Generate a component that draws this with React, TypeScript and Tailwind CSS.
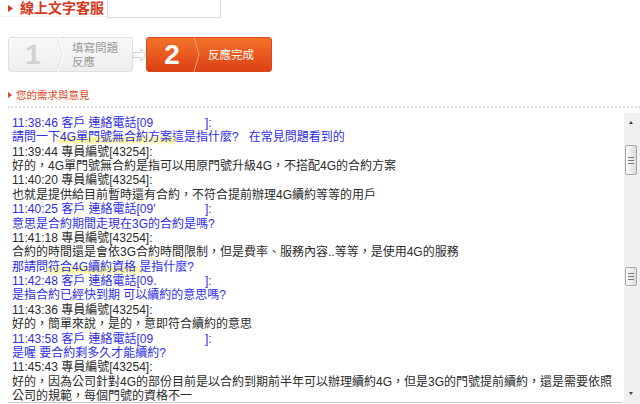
import React from "react";

const FONT = { fontFamily: '"Liberation Sans", "Noto Sans CJK TC", sans-serif' };

type Line = { t: React.ReactNode; c: "b" | "k" | "g" };

function Hl({ children }: { children: React.ReactNode }) {
  return (
    <span className="relative inline-block">
      <span className="absolute left-[-2px] right-[-4px] top-[7px] h-[6px] rounded-full bg-[#f3ee6a] opacity-80 blur-[1.5px]" />
      <span className="relative">{children}</span>
    </span>
  );
}

function Cust({ pre }: { pre: string }) {
  return (
    <>
      <span className="inline-block w-[193px] overflow-hidden align-top">{pre}</span>
      <span>]:</span>
    </>
  );
}

const lines: Line[] = [
  { t: "好的，請問您還有其他的問題嗎? 好的，我們會盡快為您處理", c: "g" },
  { t: <Cust pre="11:38:46 客戶  連絡電話[09" />, c: "b" },
  {
    t: (
      <>
        請問一下<Hl>4G單門號無合約方案</Hl>這是指什麼?&nbsp;&nbsp; 在常見問題看到的
      </>
    ),
    c: "b",
  },
  { t: "11:39:44 專員編號[43254]:", c: "k" },
  { t: "好的，4G單門號無合約是指可以用原門號升級4G，不搭配4G的合約方案", c: "k" },
  { t: "11:40:20 專員編號[43254]:", c: "k" },
  { t: "也就是提供給目前暫時還有合約，不符合提前辦理4G續約等等的用戶", c: "k" },
  { t: <Cust pre="11:40:25 客戶  連絡電話[09'" />, c: "b" },
  { t: "意思是合約期間走現在3G的合約是嗎?", c: "b" },
  { t: "11:41:18 專員編號[43254]:", c: "k" },
  { t: "合約的時間還是會依3G合約時間限制，但是費率、服務內容..等等，是使用4G的服務", c: "k" },
  {
    t: (
      <>
        那請問<Hl>符合4G續約資格</Hl> 是指什麼?
      </>
    ),
    c: "b",
  },
  { t: <Cust pre="11:42:48 客戶 連絡電話[09." />, c: "b" },
  { t: "是指合約已經快到期 可以續約的意思嗎?", c: "b" },
  { t: "11:43:36 專員編號[43254]:", c: "k" },
  { t: "好的，簡單來說，是的，意即符合續約的意思", c: "k" },
  { t: <Cust pre="11:43:58 客戶 連絡電話[09" />, c: "b" },
  { t: "是喔 要合約剩多久才能續約?", c: "b" },
  { t: "11:45:43 專員編號[43254]:", c: "k" },
  {
    t: "好的，因為公司針對4G的部份目前是以合約到期前半年可以辦理續約4G，但是3G的門號提前續約，還是需要依照",
    c: "k",
  },
  { t: "公司的規範，每個門號的資格不一", c: "k" },
];

function Thumb({ h }: { h: string }) {
  return (
    <div
      className={`${h} w-[12px] rounded-[2px] border border-[#a9a9a9] bg-gradient-to-r from-[#fdfdfd] to-[#dcdcdc] flex flex-col items-center justify-center gap-[2px]`}
    >
      <div className="h-[1px] w-[6px] bg-[#777]" />
      <div className="h-[1px] w-[6px] bg-[#777]" />
      <div className="h-[1px] w-[6px] bg-[#777]" />
    </div>
  );
}

export default function App() {
  return (
    <div className="w-[640px] h-[404px] overflow-hidden bg-white" style={FONT}>
      {/* header */}
      <div className="flex h-[18px] items-start">
        <div className="flex h-[17px] w-[107px] items-center border-b border-[#f0f0f0]">
          <svg width="5" height="7" viewBox="0 0 5 7" className="ml-[8px]">
            <path d="M0 0 L5 3.5 L0 7 Z" fill="#d8381c" />
          </svg>
          <span className="ml-[7px] text-[14px] font-bold leading-[17px] text-[#d8381c]">線上文字客服</span>
        </div>
        <div className="h-[18px] w-[114px] border border-t-0 border-[#dcdcdc] bg-white" />
      </div>

      {/* steps */}
      <div className="mt-[19px] ml-[8px] flex items-center">
        <div className="relative flex h-[35px] w-[125px] items-center rounded-[3px] border border-[#dedede] bg-gradient-to-b from-[#f8f8f8] to-[#eeeeee]">
          <div className="flex w-[48px] justify-center text-[28px] font-bold leading-none text-[#d2d2d2]">1</div>
          <svg width="8" height="35" viewBox="0 0 8 35" className="absolute left-[48px] top-[-1px]">
            <path d="M1 0 L6 17.5 L1 35" fill="none" stroke="#ffffff" strokeWidth="1.5" />
            <path d="M0 0 L5 17.5 L0 35" fill="none" stroke="#e2e2e2" strokeWidth="1" />
          </svg>
          <div className="ml-[15px] text-[11.5px] leading-[14px] text-[#9a9a9a]">
            填寫問題
            <br />
            反應
          </div>
        </div>
        <svg width="13" height="16" viewBox="0 0 13 16">
          <path d="M0 5.5 H8 V1.5 L12.5 8 L8 14.5 V10.5 H0 Z" fill="#fafafa" stroke="#cfcfcf" strokeWidth="1" />
        </svg>
        <div className="relative flex h-[35px] w-[126px] items-center rounded-[3px] border border-[#d9471a] bg-gradient-to-b from-[#f4722a] to-[#dd3f14]">
          <div className="ml-[10px] flex w-[30px] justify-center text-[28px] font-bold leading-none text-white">2</div>
          <svg width="8" height="35" viewBox="0 0 8 35" className="absolute left-[46px] top-[-1px]">
            <path d="M1 0 L6 17.5 L1 35" fill="none" stroke="#f7a47a" strokeWidth="1" />
          </svg>
          <div className="ml-[21px] text-[11.5px] leading-[14px] text-white">反應完成</div>
        </div>
      </div>

      {/* section title */}
      <div className="mt-[16px] flex h-[14px] items-center">
        <svg width="4" height="6" viewBox="0 0 4 6" className="ml-[8px]">
          <path d="M0 0 L4 3 L0 6 Z" fill="#e0461e" />
        </svg>
        <span className="ml-[4px] text-[10.5px] leading-[14px] text-[#e0461e]">您的需求與意見</span>
      </div>
      <div className="mt-[4px] ml-[8px] border-t-2 border-dotted border-[#dddddd]" />

      {/* chat */}
      <div className="mt-[5px] flex h-[291px]">
        <div className="ml-[8px] h-[290px] flex-1 overflow-hidden border-b border-[#cccccc] pl-[4px] text-[12px]">
          <div className="mt-[-11.6px]">
            {lines.map((l, i) => (
              <div
                key={i}
                className={`h-[14.4px] whitespace-nowrap leading-[14.4px] ${
                  l.c === "b" ? "text-[#2f2fe6]" : l.c === "k" ? "text-[#2b2b2b]" : "text-[#555]"
                }`}
              >
                {l.t}
              </div>
            ))}
          </div>
        </div>
        <div className="ml-[2px] flex h-[291px] w-[16px] flex-col items-start bg-[#f0f0f0] pl-[1px]">
          <svg width="12" height="4" viewBox="0 0 12 4" className="mt-[7px]">
            <path d="M4 4 L6 1 L8 4 Z" fill="#444" />
          </svg>
          <div className="mt-[21px]">
            <Thumb h="h-[30px]" />
          </div>
          <div className="mt-[92px]">
            <Thumb h="h-[19px]" />
          </div>
          <svg width="12" height="4" viewBox="0 0 12 4" className="mt-[106px]">
            <path d="M4 0 L6 3 L8 0 Z" fill="#444" />
          </svg>
        </div>
      </div>
    </div>
  );
}
